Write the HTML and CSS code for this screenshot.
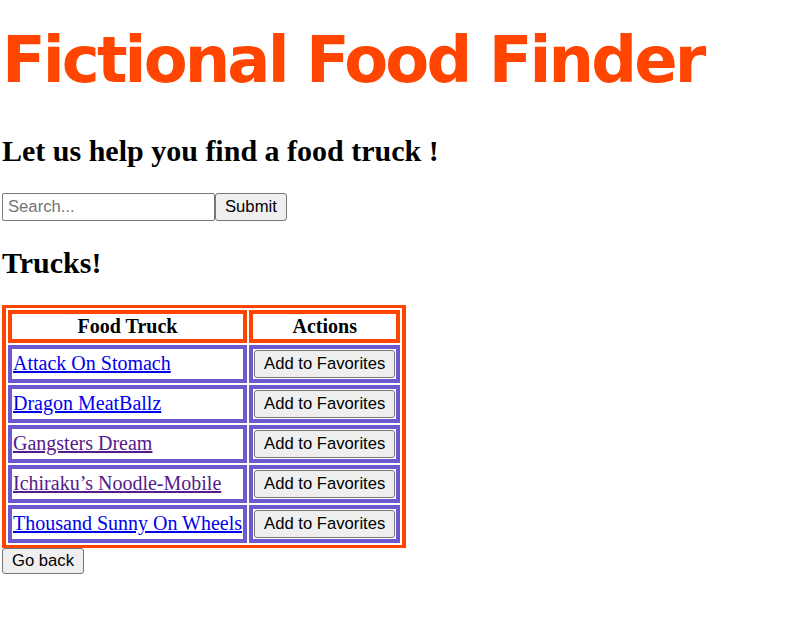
FILE: index.html
```html
<!DOCTYPE html>
<html>
<head>
<meta charset="utf-8">
<link rel="stylesheet" href="styles.css">
</head>
<body>
<h1 class="title">Fictional Food Finder</h1>
<h2 class="subtitle">Let us help you find a food truck !</h2>
<form class="search">
<input class="search-input" type="text" placeholder="Search..."><button class="btn" type="button">Submit</button>
</form>
<h2 class="section">Trucks!</h2>
<table class="trucks">
<thead>
<tr><th>Food Truck</th><th>Actions</th></tr>
</thead>
<tbody>
<tr><td><a href="#a">Attack On Stomach</a></td><td><button class="btn" type="button">Add to Favorites</button></td></tr>
<tr><td><a href="#b">Dragon MeatBallz</a></td><td><button class="btn" type="button">Add to Favorites</button></td></tr>
<tr><td><a class="visited" href="#c">Gangsters Dream</a></td><td><button class="btn" type="button">Add to Favorites</button></td></tr>
<tr><td><a class="visited" href="#d">Ichiraku’s Noodle-Mobile</a></td><td><button class="btn" type="button">Add to Favorites</button></td></tr>
<tr><td><a href="#e">Thousand Sunny On Wheels</a></td><td><button class="btn" type="button">Add to Favorites</button></td></tr>
</tbody>
</table>
<button class="btn btn-back" type="button">Go back</button>
</body>
</html>
```
FILE: styles.css
```css
body {
  margin: 2px;
  font-family: "Liberation Serif", "Times New Roman", serif;
  font-size: 20px;
  color: #000;
  background: #fff;
}
.title {
  font-family: "DejaVu Sans", Verdana, sans-serif;
  font-size: 64px;
  font-weight: bold;
  letter-spacing: -2.9px;
  color: #ff4500;
  margin: 21px 0 37px;
}
.subtitle {
  font-size: 30px;
  font-weight: bold;
  margin: 0 0 25px;
}
.section {
  font-size: 30px;
  font-weight: bold;
  margin: 25px 0 24.5px;
}
.search {
  margin: 0;
  display: flex;
}
.search-input {
  font-family: "Liberation Sans", Arial, sans-serif;
  font-size: 16.67px;
  width: 213px;
  height: 28px;
  box-sizing: border-box;
  padding: 0 5px;
  border: 1px solid #767676;
  border-radius: 2px;
  margin: 0;
  color: #000;
  background: #fff;
}
.search-input::placeholder {
  color: #757575;
}
.btn {
  font-family: "Liberation Sans", Arial, sans-serif;
  font-size: 16.67px;
  color: #000;
  background: #efefef;
  border: 1px solid #767676;
  border-radius: 3px;
  padding: 0 9px;
  margin: 0;
  height: 28px;
  box-sizing: border-box;
  vertical-align: top;
}
.btn-back {
  height: 26px;
  display: block;
  margin-top: 0;
}
.trucks {
  border-style: solid;
  border-color: #ff4500;
  border-width: 3px 4px;
  border-spacing: 2px;
}
.trucks th {
  border: 4px solid #ff4500;
  padding: 1px;
  height: 25px;
  box-sizing: border-box;
}
.trucks td {
  border: 4px solid #6a5acd;
  padding: 1px;
  line-height: 23px;
}
.trucks a {
  color: #0000ee;
}
.trucks a.visited {
  color: #551a8b;
}
```
